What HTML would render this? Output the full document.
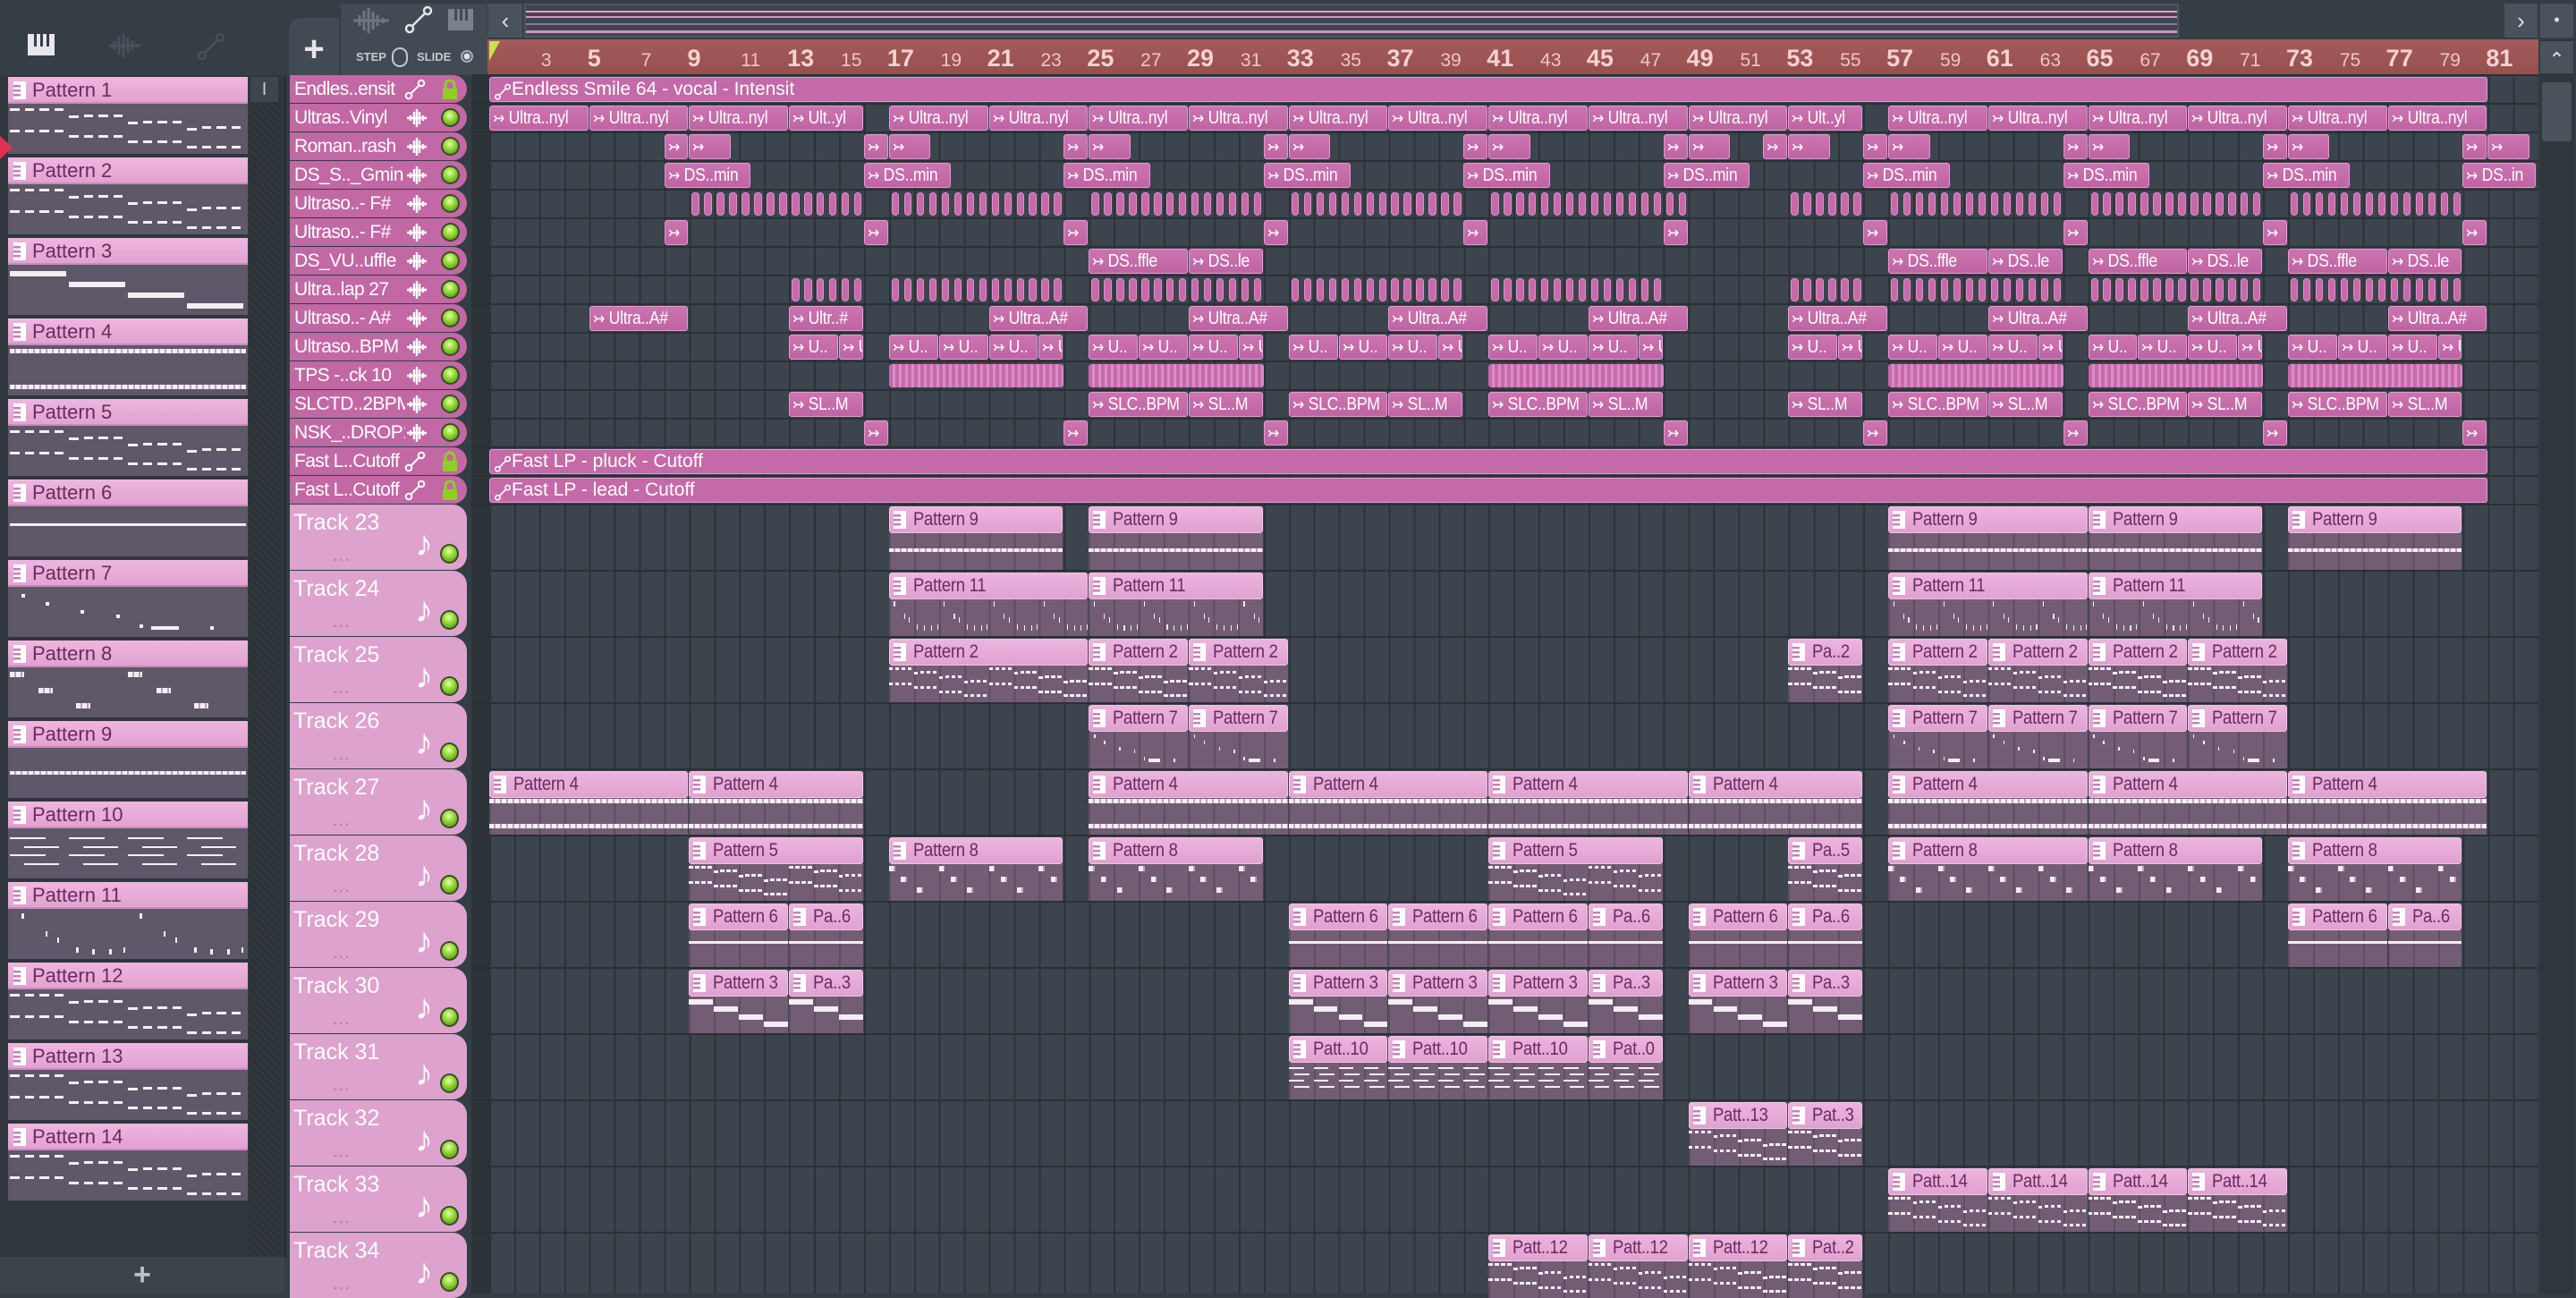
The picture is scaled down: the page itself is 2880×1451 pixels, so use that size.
<!DOCTYPE html>
<html><head><meta charset="utf-8"><style>
body{margin:0;width:2880px;height:1446px;overflow:hidden;background:#343c44;position:relative;font-family:"Liberation Sans Narrow","Liberation Sans",sans-serif}
.a{position:absolute}
.led{position:absolute;width:19px;height:21px;border-radius:50%;background:radial-gradient(circle at 45% 35%,#e8ffb0 0,#9ee040 35%,#5fa21a 80%);border:2px solid #3a4a2a;box-sizing:border-box}
.nm{display:inline-block;width:124px;overflow:hidden;white-space:nowrap;letter-spacing:-0.6px;vertical-align:top}
.cl{display:inline-block;transform:scaleX(.88);transform-origin:0 50%;letter-spacing:-0.3px}
</style></head><body>
<script>
const B=document.body;
function el(css,html,p){const d=document.createElement('div');d.className='a';d.style.cssText=css;if(html)d.innerHTML=html;(p||B).appendChild(d);return d;}
const bw=27.93;const bx=n=>547+(n-1)*bw;
const SR=84,SH=32,TR=SR+15*SH,TH=74;
el('left:0;top:0;width:2880px;height:84px;background:#353d45');
el('left:0;top:84px;width:318px;height:1322px;background:#2f363d;border-right:2px solid #262c31');
el('left:279px;top:86px;width:33px;height:1318px;background:repeating-linear-gradient(45deg,#2b3136 0 3px,#30373d 3px 6px)');
el('left:280px;top:86px;width:31px;height:28px;background:#3d454d;color:#ccc;font-size:20px;text-align:center;line-height:28px','I');
el('left:0;top:1405px;width:318px;height:41px;background:#3b434b;color:#b8c0c8;font-size:34px;text-align:center;line-height:41px;font-weight:bold','+');
el('left:30px;top:36px;width:32px;height:28px;',`<svg width="32" height="28"><rect x="1" y="2" width="30" height="24" fill="#e8e8ec"/><rect x="8" y="2" width="3" height="14" fill="#353d45"/><rect x="15" y="2" width="3" height="14" fill="#353d45"/><rect x="22" y="2" width="3" height="14" fill="#353d45"/></svg>`);
el('left:120px;top:36px;',`<svg width="40" height="30"><path d="M2 15H38M8 10v10M13 5v20M18 2v26M23 6v18M28 10v10M33 13v4" stroke="#48515a" stroke-width="3"/></svg>`);
el('left:220px;top:36px;',`<svg width="32" height="32"><circle cx="6" cy="26" r="4" fill="none" stroke="#48515a" stroke-width="2.5"/><circle cx="26" cy="6" r="4" fill="none" stroke="#48515a" stroke-width="2.5"/><path d="M9 23L23 9" stroke="#48515a" stroke-width="2.5"/></svg>`);
const pnames=[];for(let i=1;i<=14;i++)pnames.push('Pattern '+i);
function pianoIcon(){return `<svg width="14" height="20" style="position:absolute;left:6px;top:5px"><rect width="14" height="20" fill="#fff"/><rect x="0" y="4" width="8" height="2.5" fill="#c980b8"/><rect x="0" y="9" width="8" height="2.5" fill="#c980b8"/><rect x="0" y="14" width="8" height="2.5" fill="#c980b8"/></svg>`}
function notes(pid){
  const o=[];
  if([1,2,5,12,13,14].includes(pid)){
    for(let k=0;k<4;k++)for(let d=0;d<4;d++){const x=(k*4+d)/16;o.push([x,0.05+k*0.14+(d==0&&k?0.03:0),0.04,3]);o.push([x,0.55+k*0.13,0.04,3]);}
  }else if(pid==3){for(let k=0;k<4;k++)o.push([k/4,0.1+k*0.27,0.24,6]);}
  else if(pid==4){o.push([0,0.03,1,5,'d']);o.push([0,0.9,1,5,'d']);}
  else if(pid==6){o.push([0,0.35,1,3]);}
  else if(pid==7){[[0.05,0.1],[0.15,0.3],[0.3,0.5],[0.45,0.6],[0.55,0.85],[0.7,0.9],[0.85,0.9]].forEach(p=>o.push([p[0],p[1],0.015,4]));o.push([0.6,0.9,0.1,4])}
  else if(pid==8){[0,0.5].forEach(s=>{o.push([s,0.05,0.06,6,'d']);o.push([s+0.12,0.45,0.06,6,'d']);o.push([s+0.28,0.85,0.06,6,'d'])});}
  else if(pid==9){o.push([0,0.5,1,4,'d']);}
  else if(pid==10){[0.15,0.35,0.55,0.75].forEach((y,i)=>{for(let k=0;k<4;k++)o.push([k/4+(i%2)*0.06,y,0.15,2])});}
  else if(pid==11){[0,0.5].forEach(s=>{[[0.05,0.05],[0.15,0.5],[0.2,0.65],[0.28,0.9],[0.35,0.95],[0.42,0.95],[0.48,0.9]].forEach(p=>o.push([s+p[0],p[1],0.01,6]))});}
  return o;
}
function noteHtml(pid,W,H,cycW){
  let h='';const o=notes(pid);
  for(let c=0;c*cycW<W;c++){o.forEach(n=>{const x=c*cycW+n[0]*cycW;if(x>=W)return;let w=Math.min(n[2]*cycW,W-x);
    const bg=n[4]=='d'?'repeating-linear-gradient(90deg,#f4eef4 0 5px,#b9a4b9 5px 7px)':'#f4eef4';
    h+=`<div class="a" style="left:${x}px;top:${n[1]*(H-n[3])}px;width:${w}px;height:${n[3]}px;background:${bg}"></div>`;});}
  return h;
}
for(let i=0;i<14;i++){
  const t=86+i*90;
  el(`left:9px;top:${t}px;width:268px;height:30px;background:linear-gradient(#eeb6df,#e2a2d2);border-bottom:2px solid #c98bbd;box-sizing:border-box;color:#6b2a5e;font-size:22px;line-height:30px;padding-left:27px`,pianoIcon()+pnames[i]);
  el(`left:9px;top:${t+30}px;width:268px;height:56px;background:#5f5868;overflow:hidden`,`<div class="a" style="left:2px;top:3px;width:264px;height:50px">${noteHtml(i+1,264,50,264)}</div>`);
}
el('left:0;top:152px;width:0;height:0;border-left:14px solid #e03050;border-top:13px solid transparent;border-bottom:13px solid transparent');
el('left:323px;top:20px;width:56px;height:64px;background:#424a53;border-radius:14px 0 0 0;color:#e6e6ea;font-size:40px;text-align:center;line-height:70px;font-weight:bold','+');
el('left:381px;top:4px;width:164px;height:80px;background:#424a53');
el('left:393px;top:8px;',`<svg width="44" height="30"><path d="M2 15H42M9 9v12M14 4v22M19 1v28M24 5v20M29 9v12M35 12v6" stroke="#6d7680" stroke-width="3"/></svg>`);
el('left:452px;top:6px;',`<svg width="32" height="32"><circle cx="6" cy="26" r="4" fill="none" stroke="#e4e4ea" stroke-width="2.5"/><circle cx="26" cy="6" r="4" fill="none" stroke="#e4e4ea" stroke-width="2.5"/><path d="M9 23L23 9" stroke="#e4e4ea" stroke-width="2.5"/></svg>`);
el('left:500px;top:9px;',`<svg width="30" height="26"><rect x="1" y="1" width="28" height="24" fill="#7a838c"/><rect x="8" y="1" width="3" height="13" fill="#424a53"/><rect x="14" y="1" width="3" height="13" fill="#424a53"/><rect x="20" y="1" width="3" height="13" fill="#424a53"/></svg>`);
el('left:398px;top:56px;color:#c4cad0;font-size:13px;font-weight:bold','STEP');
el('left:438px;top:53px;width:14px;height:18px;border:2px solid #c4cad0;border-radius:9px');
el('left:466px;top:56px;color:#c4cad0;font-size:13px;font-weight:bold','SLIDE');
el('left:515px;top:56px;width:14px;height:14px;border:2px solid #aab;border-radius:50%;box-sizing:border-box;background:radial-gradient(#dde 0 3px,transparent 4px)');
el('left:546px;top:4px;width:38px;height:38px;background:#4a535c;color:#dde;font-size:26px;text-align:center;line-height:38px','‹');
el('left:586px;top:4px;width:1850px;height:38px;background:#3e474f;border:2px solid #4d565f;box-sizing:border-box;overflow:hidden',
 `<div class="a" style="left:0;top:6px;width:1850px;height:2px;background:#e89ad8"></div><div class="a" style="left:0;top:12px;width:1850px;height:2px;background:#d890c8"></div><div class="a" style="left:0;top:20px;width:1850px;height:2px;background:#c77cb8;opacity:.7"></div><div class="a" style="left:0;top:28px;width:1850px;height:3px;background:#f0a8e0;opacity:.8"></div>`);
el('left:2800px;top:4px;width:37px;height:38px;background:#4a535c;color:#dde;font-size:26px;text-align:center;line-height:38px','›');
el('left:2840px;top:4px;width:37px;height:38px;background:#4a535c;color:#dde;font-size:18px;text-align:center;line-height:36px','•');
el('left:2840px;top:44px;width:38px;height:1402px;background:#2f363c');
el('left:2840px;top:46px;width:37px;height:36px;background:#4a535c;color:#dde;font-size:22px;text-align:center;line-height:42px','⌃');
el('left:2842px;top:92px;width:33px;height:66px;background:#4a535c;border-radius:3px');
el('left:545px;top:44px;width:2293px;height:39px;background:linear-gradient(#a55a5b,#96504f)');
el('left:547px;top:46px;width:0;height:0;border-top:22px solid #c8e050;border-right:12px solid transparent');
for(let n=1;n<=81;n+=2){const big=(n%4==1);el(`left:${bx(n)+(big?-2:2)}px;top:${big?50:56}px;color:${big?'#f4d2d0':'#f0c4c2'};font-size:${big?27:21}px;font-weight:${big?'bold':'normal'}`,n==1?'':String(n));}
el('left:527px;top:84px;width:20px;height:1362px;background:#2c3339');
el(`left:547px;top:84px;width:2291px;height:1362px;background:repeating-linear-gradient(90deg,#2c3238 0 2px,#3c444d 2px ${bw}px)`);
for(let i=0;i<=15;i++)el(`left:527px;top:${SR+i*SH-1}px;width:2311px;height:2px;background:#2a3036`);
for(let j=1;j<12;j++)el(`left:527px;top:${TR+j*TH-1}px;width:2311px;height:2px;background:#2a3036`);
const names=["Endles..ensit","Ultras..Vinyl","Roman..rash","DS_S.._Gmin","Ultraso..- F#","Ultraso..- F#","DS_VU..uffle","Ultra..lap 27","Ultraso..- A#","Ultraso..BPM","TPS -..ck 10","SLCTD..2BPM","NSK_..DROP1","Fast L..Cutoff","Fast L..Cutoff"];
const wave=`<svg width="24" height="22" style="position:absolute;left:130px;top:5px"><path d="M1 11H23M5 8v6M9 4v14M12 1v20M15 4v14M19 8v6" stroke="#fff" stroke-width="2.4"/></svg>`;
const autoI=(c)=>`<svg width="24" height="24"><circle cx="5" cy="19" r="3.3" fill="none" stroke="${c}" stroke-width="2"/><circle cx="19" cy="5" r="3.3" fill="none" stroke="${c}" stroke-width="2"/><path d="M7.5 16.5L16.5 7.5" stroke="${c}" stroke-width="2"/></svg>`;
const lock=`<svg width="18" height="24" style="position:absolute;left:170px;top:4px"><path d="M4 11V7a5 5 0 0 1 10 0v4" fill="none" stroke="#8ed020" stroke-width="3"/><rect x="1" y="11" width="16" height="12" fill="#8ed020"/></svg>`;
names.forEach((n,i)=>{const t=SR+i*SH;const isA=(i==0||i>=13);
  el(`left:324px;top:${t}px;width:198px;height:${SH-1}px;background:#c268a5;border-radius:0 16px 16px 0;color:#fff;font-size:21px;line-height:${SH}px;padding-left:5px;box-sizing:border-box;white-space:nowrap`,
   `<span class="nm">${n}</span>`+(isA?`<div class="a" style="left:128px;top:4px">${autoI('#fff')}</div>`:wave)+(isA?lock:`<div class="led" style="left:169px;top:5px;width:21px"></div>`));
});
for(let j=0;j<12;j++){const t=TR+j*TH;
  el(`left:324px;top:${t}px;width:198px;height:${TH-1}px;background:#dea2cf;border-radius:0 16px 16px 0;color:#fff;font-size:25px;padding:6px 0 0 4px;box-sizing:border-box`,
  `Track ${23+j}<div class="a" style="left:48px;top:52px;color:#b07aa4;font-size:20px;letter-spacing:1px;line-height:10px">...</div><div class="a" style="left:140px;top:22px;font-size:40px;color:#fff">♪</div><div class="led" style="left:168px;top:44px;width:21px;height:22px"></div>`);
}
function audio(row,s,l,label,arrow=true){const t=SR+row*SH;
  el(`left:${bx(s)}px;top:${t+2}px;width:${l*bw-1}px;height:${SH-4}px;background:linear-gradient(#cc74b0,#bf64a3);border:1px solid #e49ad4;border-radius:3px;color:#fff;font-size:20px;line-height:${SH-6}px;padding-left:3px;overflow:hidden;white-space:nowrap;box-sizing:border-box`,`<span class="cl">`+(arrow?'<span style="font-size:18px">↣</span> ':'')+label+`</span>`);}
function auto(row,label){const t=SR+row*SH;
  el(`left:${bx(1)}px;top:${t+2}px;width:${80*bw}px;height:${SH-4}px;background:#c46aa8;border:1px solid #e49ad4;border-radius:3px;color:#fff;font-size:21px;line-height:${SH-6}px;padding-left:24px;box-sizing:border-box;white-space:nowrap;overflow:hidden`,`<div class="a" style="left:2px;top:3px;transform:scale(.8)">${autoI('#fff')}</div>`+label);}
auto(0,'Endless Smile 64 - vocal - Intensit');auto(13,'Fast LP - pluck - Cutoff');auto(14,'Fast LP - lead - Cutoff');
for(let s=1;s<=77;s+=4){const sh=(s==13||s==53);audio(1,s,sh?3:4,sh?'Ult..yl':'Ultra..nyl');}
[8,16,24,32,40,48,52,56,64,72,80].forEach(s=>{audio(2,s,1,'');audio(2,s+1,1.7,'');});
[8,16,24,32,40,48,56,64,72].forEach(s=>audio(3,s,3.5,'DS..min'));audio(3,80,2.95,'DS..in');
function ticks(row,ranges){const t=SR+row*SH;ranges.forEach(r=>{for(let b=r[0];b<r[1];b+=0.5)el(`left:${bx(b)+3}px;top:${t+3}px;width:${bw*0.3}px;height:${SH-6}px;background:#c66aa9;border:1px solid #df90cb;border-radius:4px;box-sizing:border-box`);});}
ticks(4,[[9,16],[17,24],[25,32],[33,40],[41,49],[53,56],[57,64],[65,72],[73,80]]);
[8,16,24,32,40,48,56,64,72,80].forEach(s=>audio(5,s,1,''));
[25,57,65,73].forEach(s=>{audio(6,s,4,'DS..ffle');audio(6,s+4,3,'DS..le');});
ticks(7,[[13,16],[17,24],[25,32],[33,40],[41,48],[53,56],[57,64],[65,72],[73,80]]);
audio(8,5,4,'Ultra..A#');audio(8,13,3,'Ultr..#');[21,29,37,45,53,61,69,77].forEach(s=>audio(8,s,4,'Ultra..A#'));
[[13,16],[17,24],[25,32],[33,40],[41,48],[53,56],[57,64],[65,72],[73,80]].forEach(r=>{for(let b=r[0];b<r[1];b+=2)audio(9,b,Math.min(2,r[1]-b),'U..');});
[17,25,41,57,65,73].forEach(s=>{const t=SR+10*SH;el(`left:${bx(s)}px;top:${t+3}px;width:${7*bw}px;height:${SH-6}px;background:repeating-linear-gradient(90deg,#c66aa9 0 4px,#dc8cc8 4px 7px);border-radius:3px`);});
[[13,3,'SL..M'],[25,4],[29,3],[33,4],[37,3],[41,4],[45,3],[53,3],[57,4],[61,3],[65,4],[69,3],[73,4],[77,3]].forEach(c=>audio(11,c[0],c[1],c[1]==4?'SLC..BPM':'SL..M'));
[16,24,32,48,56,64,72,80].forEach(s=>audio(12,s,1,''));
function pat(tr,s,l,label,pid){const t=TR+tr*TH;const W=l*bw-1;
  const d=el(`left:${bx(s)}px;top:${t+2}px;width:${W}px;height:${TH-3}px;overflow:hidden`);
  el(`left:0;top:0;width:${W}px;height:30px;background:linear-gradient(#ecb4de,#e0a1d1);border:1px solid #f2c4e6;border-radius:3px;box-sizing:border-box;color:#6b2a5e;font-size:21px;line-height:28px;padding-left:26px;white-space:nowrap;overflow:hidden`,pianoIcon().replace('left:6px;top:5px','left:4px;top:4px')+`<span class="cl">${label}</span>`,d);
  el(`left:0;top:30px;width:${W}px;height:${TH-33}px;background:repeating-linear-gradient(90deg,#5f4d61 0 2px,#735d75 2px ${bw}px);overflow:hidden`,noteHtml(pid,W,TH-37,4*bw),d);
}
[[17,7],[25,7],[57,8],[65,7],[73,7]].forEach(c=>pat(0,c[0],c[1],'Pattern 9',9));
[[17,8],[25,7],[57,8],[65,7]].forEach(c=>pat(1,c[0],c[1],'Pattern 11',11));
pat(2,17,8,'Pattern 2',2);[25,29,57,61,65,69].forEach(s=>pat(2,s,4,'Pattern 2',2));pat(2,53,3,'Pa..2',2);
[25,29,57,61,65,69].forEach(s=>pat(3,s,4,'Pattern 7',7));
[[1,8],[9,7],[25,8],[33,8],[41,8],[49,7],[57,8],[65,8],[73,8]].forEach(c=>pat(4,c[0],c[1],'Pattern 4',4));
pat(5,9,7,'Pattern 5',5);pat(5,17,7,'Pattern 8',8);pat(5,25,7,'Pattern 8',8);pat(5,41,7,'Pattern 5',5);pat(5,53,3,'Pa..5',5);pat(5,57,8,'Pattern 8',8);pat(5,65,7,'Pattern 8',8);pat(5,73,7,'Pattern 8',8);
[[9,4,'Pattern 6'],[13,3,'Pa..6'],[33,4,'Pattern 6'],[37,4,'Pattern 6'],[41,4,'Pattern 6'],[45,3,'Pa..6'],[49,4,'Pattern 6'],[53,3,'Pa..6'],[73,4,'Pattern 6'],[77,3,'Pa..6']].forEach(c=>pat(6,c[0],c[1],c[2],6));
[[9,4,'Pattern 3'],[13,3,'Pa..3'],[33,4,'Pattern 3'],[37,4,'Pattern 3'],[41,4,'Pattern 3'],[45,3,'Pa..3'],[49,4,'Pattern 3'],[53,3,'Pa..3']].forEach(c=>pat(7,c[0],c[1],c[2],3));
[[33,4,'Patt..10'],[37,4,'Patt..10'],[41,4,'Patt..10'],[45,3,'Pat..0']].forEach(c=>pat(8,c[0],c[1],c[2],10));
pat(9,49,4,'Patt..13',13);pat(9,53,3,'Pat..3',13);
[57,61,65,69].forEach(s=>pat(10,s,4,'Patt..14',14));
[[41,4,'Patt..12'],[45,4,'Patt..12'],[49,4,'Patt..12'],[53,3,'Pat..2']].forEach(c=>pat(11,c[0],c[1],c[2],12));
</script>
</body></html>
